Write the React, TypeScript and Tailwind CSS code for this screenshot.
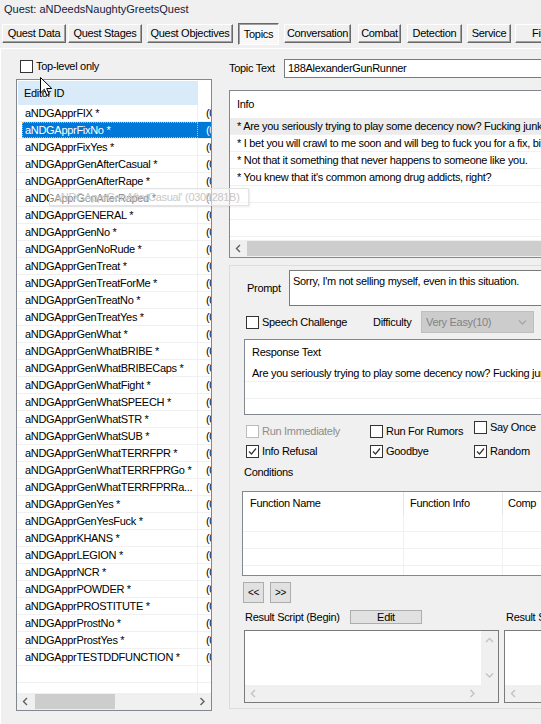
import React from 'react';

const tabs = [
  { label: 'Quest Data', cls: 'w-[64px]' },
  { label: 'Quest Stages', cls: 'ml-[2px] w-[74px]' },
  { label: 'Quest Objectives', cls: 'ml-[5px] w-[86px]' },
  { label: 'Topics', cls: 'ml-[5px] w-[41px]', active: true },
  { label: 'Conversation', cls: 'ml-[5px] w-[67px]' },
  { label: 'Combat', cls: 'ml-[7px] w-[43px]' },
  { label: 'Detection', cls: 'ml-[6px] w-[55px]' },
  { label: 'Service', cls: 'ml-[5px] w-[44px]' },
  { label: 'Filtered Dialogue', cls: 'ml-[4px] w-[112px]' },
];

const topics = [
  'aNDGApprFIX *',
  'aNDGApprFixNo *',
  'aNDGApprFixYes *',
  'aNDGApprGenAfterCasual *',
  'aNDGApprGenAfterRape *',
  'aNDGApprGenAfterRaped *',
  'aNDGApprGENERAL *',
  'aNDGApprGenNo *',
  'aNDGApprGenNoRude *',
  'aNDGApprGenTreat *',
  'aNDGApprGenTreatForMe *',
  'aNDGApprGenTreatNo *',
  'aNDGApprGenTreatYes *',
  'aNDGApprGenWhat *',
  'aNDGApprGenWhatBRIBE *',
  'aNDGApprGenWhatBRIBECaps *',
  'aNDGApprGenWhatFight *',
  'aNDGApprGenWhatSPEECH *',
  'aNDGApprGenWhatSTR *',
  'aNDGApprGenWhatSUB *',
  'aNDGApprGenWhatTERRFPR *',
  'aNDGApprGenWhatTERRFPRGo *',
  'aNDGApprGenWhatTERRFPRRa...',
  'aNDGApprGenYes *',
  'aNDGApprGenYesFuck *',
  'aNDGApprKHANS *',
  'aNDGApprLEGION *',
  'aNDGApprNCR *',
  'aNDGApprPOWDER *',
  'aNDGApprPROSTITUTE *',
  'aNDGApprProstNo *',
  'aNDGApprProstYes *',
  'aNDGApprTESTDDFUNCTION *',
];

const infoLines = [
  '* Are you seriously trying to play some decency now? Fucking junkie.',
  '* I bet you will crawl to me soon and will beg to fuck you for a fix, bitch.',
  '* Not that it something that never happens to someone like you.',
  "* You knew that it's common among drug addicts, right?",
];

const chevrons = {
  left: 'M5 1 L1.5 4.5 L5 8',
  right: 'M1.5 1 L5 4.5 L1.5 8',
  up: 'M1 5 L4.5 1.5 L8 5',
  down: 'M1 1.5 L4.5 5 L8 1.5',
};

function Chevron({ dir, color = '#606060' }: { dir: keyof typeof chevrons; color?: string }) {
  const vertical = dir === 'up' || dir === 'down';
  return (
    <svg width={vertical ? 9 : 7} height={vertical ? 7 : 9} viewBox={vertical ? '0 0 9 7' : '0 0 7 9'}>
      <path d={chevrons[dir]} fill="none" stroke={color} strokeWidth="1.4" />
    </svg>
  );
}

function Check({ checked, disabled }: { checked?: boolean; disabled?: boolean }) {
  return (
    <span
      className={`flex h-[13px] w-[13px] shrink-0 items-center justify-center border bg-white ${
        disabled ? 'border-[#bcbcbc]' : 'border-[#333333]'
      }`}
    >
      {checked ? (
        <svg width="9" height="9" viewBox="0 0 9 9">
          <path d="M1 4.5 L3.5 7 L8 1.5" fill="none" stroke="#333333" strokeWidth="1.2" />
        </svg>
      ) : null}
    </span>
  );
}

function CheckField({
  label,
  checked,
  disabled,
  className = '',
}: {
  label: string;
  checked?: boolean;
  disabled?: boolean;
  className?: string;
}) {
  return (
    <div className={`flex items-center gap-[3px] whitespace-nowrap ${className}`}>
      <Check checked={checked} disabled={disabled} />
      <span className={disabled ? 'text-[#8d8d8d]' : ''}>{label}</span>
    </div>
  );
}

function HScroll({ thumb }: { thumb?: string }) {
  return (
    <div className="flex h-[17px] shrink-0 bg-[#f0f0f0]">
      <div className="flex w-[17px] items-center justify-center">
        <Chevron dir="left" />
      </div>
      <div className="flex flex-1 items-center">
        {thumb ? <div className={`h-[15px] bg-[#cdcdcd] ${thumb}`} /> : null}
      </div>
      <div className="flex w-[17px] items-center justify-center">
        <Chevron dir="right" />
      </div>
    </div>
  );
}

function ScriptBox({ className }: { className: string }) {
  return (
    <div className={`flex h-[73px] flex-col border border-[#7a7a7a] bg-white ${className}`}>
      <div className="flex flex-1">
        <div className="flex-1" />
        <div className="flex w-[17px] flex-col items-center justify-between bg-[#f0f0f0] py-[6px]">
          <Chevron dir="up" color="#c2c2c2" />
          <Chevron dir="down" color="#c2c2c2" />
        </div>
      </div>
      <div className="flex h-[17px] bg-[#f0f0f0]">
        <div className="flex w-[17px] items-center justify-center">
          <Chevron dir="left" color="#c2c2c2" />
        </div>
        <div className="flex-1" />
        <div className="flex w-[17px] items-center justify-center">
          <Chevron dir="right" color="#c2c2c2" />
        </div>
        <div className="w-[17px]" />
      </div>
    </div>
  );
}

function TopicList() {
  return (
    <div className="flex h-[632px] w-[196px] flex-col border border-[#828790] bg-white">
      <div className="flex h-[25px] shrink-0 pt-[1px]">
        <div className="ml-[1px] flex h-[24px] w-[180px] items-center bg-[#d9ebf9] pl-[6px]">Editor ID</div>
        <div className="flex-1" />
      </div>
      <div className="flex-1 overflow-hidden">
        {topics.map((t, i) => {
          const selected = i === 1;
          return (
            <div key={t} className="flex h-[17px] border-b border-[#f0f0f0] pl-[5px]">
              <div className={`flex flex-1 ${selected ? 'bg-[#0078d7] text-white' : ''}`}>
                <div
                  className={`flex w-[176px] items-center whitespace-nowrap pl-[3px] ${
                    selected
                      ? 'outline-1 -outline-offset-1 outline-dotted outline-[#f2b24c]'
                      : 'border-r border-[#f0f0f0]'
                  }`}
                >
                  {t}
                </div>
                <div className="flex items-center overflow-hidden whitespace-nowrap pl-[8px]">(0</div>
              </div>
            </div>
          );
        })}
        {[0, 1, 2].map((i) => (
          <div key={i} className="flex h-[17px] border-b border-[#f0f0f0] pl-[5px]">
            <div className="w-[176px] border-r border-[#f0f0f0]" />
          </div>
        ))}
      </div>
      <HScroll thumb="w-[80px] ml-[1px]" />
    </div>
  );
}

function InfoList() {
  return (
    <div className="mt-[12px] flex h-[168px] w-[420px] flex-col border border-[#828790] bg-white">
      <div className="flex h-[27px] shrink-0 items-center pl-[7px]">Info</div>
      <div className="flex-1 overflow-hidden">
        {infoLines.map((line, i) => (
          <div
            key={line}
            className={`flex h-[17px] items-center whitespace-nowrap border-b border-[#f0f0f0] pl-[7px] ${
              i === 0 ? 'bg-[#ececec]' : ''
            }`}
          >
            {line}
          </div>
        ))}
        {[0, 1, 2].map((i) => (
          <div key={i} className="h-[17px] border-b border-[#f0f0f0]" />
        ))}
      </div>
      <HScroll thumb="w-[380px]" />
    </div>
  );
}

function ResponseGroup() {
  return (
    <div className="mt-[7px] flex h-[444px] w-[420px] flex-col border border-[#dcdcdc]">
      {/* prompt */}
      <div className="mt-[4px] flex h-[36px]">
        <div className="flex w-[59px] items-center pl-[17px]">Prompt</div>
        <div className="flex-1 whitespace-nowrap border border-[#7a7a7a] bg-white px-[3px] pt-[4px]">
          Sorry, I'm not selling myself, even in this situation.
        </div>
      </div>

      {/* speech challenge */}
      <div className="mt-[5px] flex h-[22px] items-center pl-[16px]">
        <CheckField label="Speech Challenge" className="w-[127px]" />
        <span className="w-[48px]">Difficulty</span>
        <div className="flex h-[22px] w-[113px] items-center justify-between border border-[#bfbfbf] bg-[#cccccc] pl-[4px] pr-[6px] text-[#838383]">
          <span>Very Easy(10)</span>
          <Chevron dir="down" color="#a8a8a8" />
        </div>
      </div>

      {/* response text */}
      <div className="ml-[14px] mt-[6px] flex h-[76px] flex-col overflow-hidden border border-[#828790] bg-white">
        <div className="flex h-[25px] shrink-0 items-center pl-[7px]">Response Text</div>
        <div className="flex h-[17px] shrink-0 items-center whitespace-nowrap border-b border-[#f0f0f0] pl-[7px]">
          Are you seriously trying to play some decency now? Fucking junkie.
        </div>
        <div className="h-[17px] shrink-0 border-b border-[#f0f0f0]" />
      </div>

      {/* flags */}
      <div className="mt-[10px] flex h-[13px] items-start pl-[16px]">
        <CheckField label="Run Immediately" disabled className="w-[124px]" />
        <CheckField label="Run For Rumors" className="w-[104px]" />
        <CheckField label="Say Once" className="-mt-[4px]" />
      </div>
      <div className="mt-[7px] flex h-[13px] items-start pl-[16px]">
        <CheckField label="Info Refusal" checked className="w-[124px]" />
        <CheckField label="Goodbye" checked className="w-[104px]" />
        <CheckField label="Random" checked />
      </div>

      <div className="mt-[8px] h-[13px] pl-[14px]">Conditions</div>

      {/* conditions table */}
      <div className="ml-[12px] mt-[12px] flex h-[85px] flex-col overflow-hidden border border-[#828790] bg-white">
        <div className="flex h-[23px] shrink-0">
          <div className="flex w-[161px] items-center border-r border-[#e5e5e5] pl-[7px]">Function Name</div>
          <div className="flex w-[99px] items-center border-r border-[#e5e5e5] pl-[6px]">Function Info</div>
          <div className="flex items-center pl-[5px]">Comp</div>
        </div>
        {[0, 1, 2, 3].map((i) => (
          <div key={i} className="flex h-[17px] shrink-0 border-b border-[#f0f0f0]">
            <div className="w-[161px] border-r border-[#f0f0f0]" />
            <div className="w-[99px] border-r border-[#f0f0f0]" />
          </div>
        ))}
      </div>

      <div className="ml-[13px] mt-[6px] flex gap-[6px]">
        <div className="flex h-[21px] w-[21px] items-center justify-center border border-[#adadad] bg-[#e1e1e1] text-[10px]">
          &lt;&lt;
        </div>
        <div className="flex h-[21px] w-[21px] items-center justify-center border border-[#adadad] bg-[#e1e1e1] text-[10px]">
          &gt;&gt;
        </div>
      </div>

      {/* result scripts */}
      <div className="mt-[7px] flex">
        <div className="ml-[14px] flex w-[255px] flex-col">
          <div className="flex h-[14px] items-center">
            <span className="w-[106px] pl-[1px]">Result Script (Begin)</span>
            <div className="flex h-[14px] w-[72px] items-center justify-center border border-[#adadad] bg-[#e1e1e1]">
              Edit
            </div>
          </div>
          <ScriptBox className="mt-[6px] w-[255px]" />
        </div>
        <div className="ml-[5px] flex flex-col">
          <div className="flex h-[14px] items-center whitespace-nowrap pl-[2px]">Result Script (End)</div>
          <ScriptBox className="mt-[6px] w-[120px]" />
        </div>
      </div>
    </div>
  );
}

export default function App() {
  return (
    <div className="relative h-[724px] w-[541px] overflow-hidden bg-[#f0f0f0] font-['Liberation_Sans',Arial,sans-serif] text-[11px] leading-[13px] tracking-[-0.3px] text-black">
      <div className="h-[22px] pl-[4px] pt-[3px] tracking-normal text-[#13213d]">Quest: aNDeedsNaughtyGreetsQuest</div>

      {/* tab strip */}
      <div className="flex h-[23px] items-center pl-[2px]">
        {tabs.map((t) =>
          t.active ? (
            <div
              key={t.label}
              className={`flex h-[22px] shrink-0 items-center justify-center border border-b-white border-l-[#696969] border-r-white border-t-[#696969] bg-[#f8f8f8] pt-[2px] shadow-[inset_1px_1px_0_#a0a0a0] ${t.cls}`}
            >
              {t.label}
            </div>
          ) : (
            <div
              key={t.label}
              className={`flex h-[19px] shrink-0 items-center justify-center whitespace-nowrap border border-b-[#696969] border-l-white border-r-[#696969] border-t-white shadow-[inset_-1px_-1px_0_#a0a0a0] ${t.cls}`}
            >
              {t.label}
            </div>
          ),
        )}
      </div>

      {/* page body */}
      <div className="mt-[3px] flex h-[676px] border-l border-t border-white pl-[15px]">
        <div className="flex flex-col pt-[11px]">
          <CheckField label="Top-level only" className="h-[13px] pl-[4px]" />
          <div className="mt-[6px]">
            <TopicList />
          </div>
        </div>

        <div className="ml-[17px] flex flex-col pt-[10px]">
          <div className="flex h-[19px] items-center">
            <span className="w-[55px]">Topic Text</span>
            <div className="flex h-[19px] w-[360px] items-center border border-[#7a7a7a] bg-white pl-[3px]">
              188AlexanderGunRunner
            </div>
          </div>
          <InfoList />
          <ResponseGroup />
        </div>
      </div>

      {/* hover tooltip, fading out */}
      <div className="absolute left-[49px] top-[188px] flex h-[18px] w-[200px] items-center whitespace-nowrap border border-[#e3e3e3] bg-white/50 pl-[5px] text-[#c8c8c8] shadow-[1px_1px_2px_rgba(0,0,0,0.08)]">
        aNDGApprGenAfterCasual' (0300281B)
      </div>

      {/* mouse pointer */}
      <svg className="absolute left-[40px] top-[77px]" width="13" height="20" viewBox="0 0 13 20">
        <path
          d="M0.5 0.5 L0.5 16 L4.3 12.3 L6.8 18.3 L9.2 17.3 L6.7 11.5 L11.8 11.5 Z"
          fill="white"
          stroke="black"
          strokeWidth="1"
          strokeLinejoin="miter"
        />
      </svg>
    </div>
  );
}
